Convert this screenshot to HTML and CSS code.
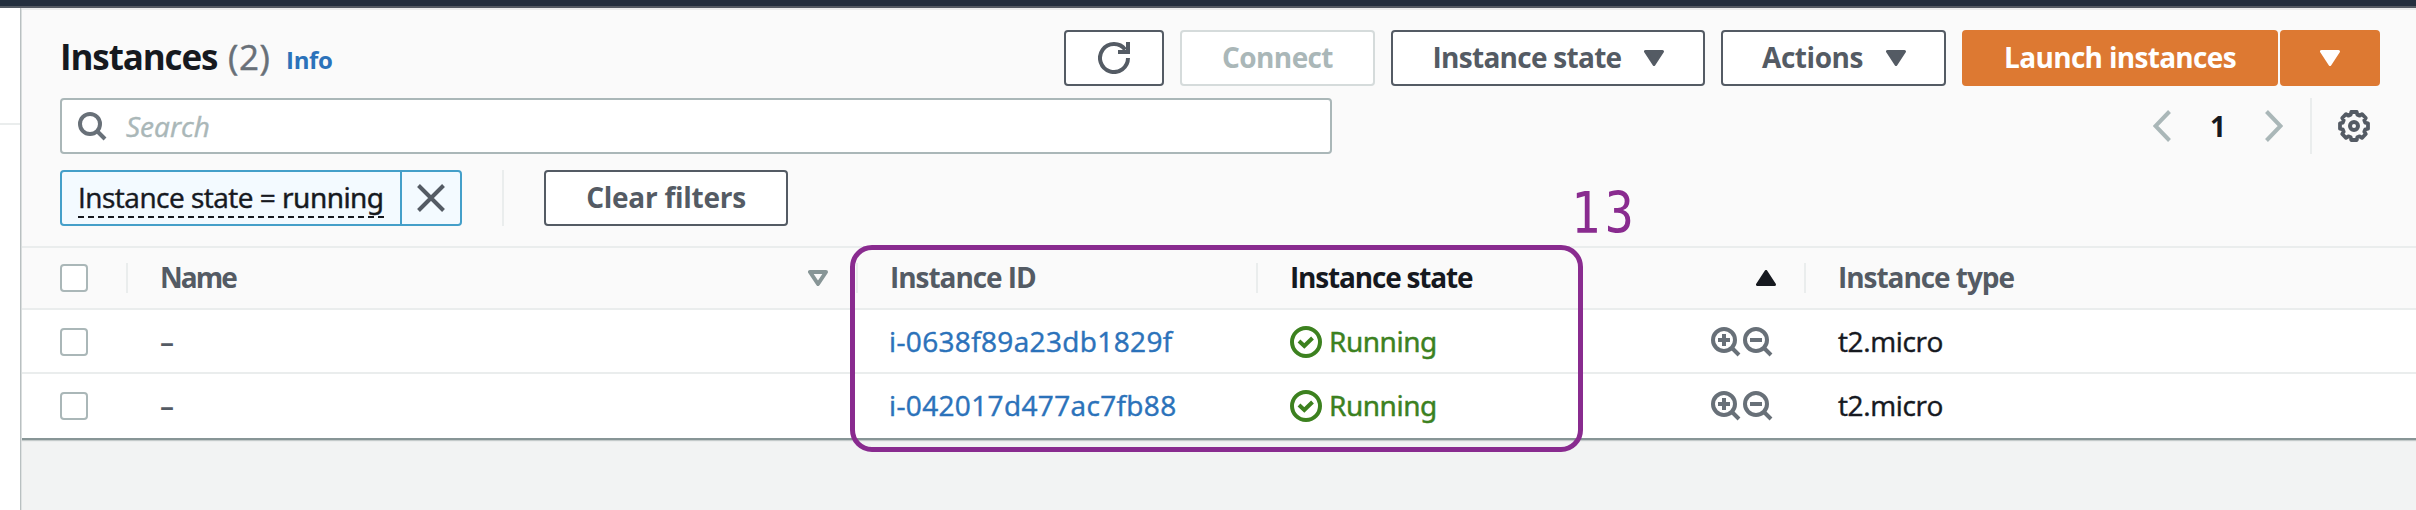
FILE: index.html
```html
<!DOCTYPE html>
<html lang="en">
<head>
<meta charset="utf-8">
<title>Instances</title>
<link rel="stylesheet" href="styles.css">
</head>
<body>
<svg class="defs" width="0" height="0" aria-hidden="true">
  <symbol id="caret" viewBox="0 0 20 16"><path d="M1.5 1.5h17L10 14.5z" fill="currentColor" stroke="currentColor" stroke-width="3" stroke-linejoin="round"/></symbol>
  <symbol id="caret-up" viewBox="0 0 20 16"><path d="M1.5 14.5h17L10 1.5z" fill="currentColor" stroke="currentColor" stroke-width="3" stroke-linejoin="round"/></symbol>
  <symbol id="caret-open" viewBox="0 0 20 16"><path d="M2 2h16L10 14z" fill="none" stroke="currentColor" stroke-width="4" stroke-linejoin="round"/></symbol>
  <symbol id="check" viewBox="0 0 32 32"><circle cx="16" cy="16" r="14" fill="none" stroke="currentColor" stroke-width="4"/><path d="M9 15l5.3 5 8.2-8" fill="none" stroke="currentColor" stroke-width="4"/></symbol>
  <symbol id="zoom-in" viewBox="0 0 32 32"><circle cx="13" cy="13" r="11" fill="none" stroke="currentColor" stroke-width="4"/><path d="M20.500 20.500l7.500 7.500M7 13h12M13 7v12" fill="none" stroke="currentColor" stroke-width="4"/></symbol>
  <symbol id="zoom-out" viewBox="0 0 32 32"><circle cx="13" cy="13" r="11" fill="none" stroke="currentColor" stroke-width="4"/><path d="M20.500 20.500l7.500 7.500M7 13h12" fill="none" stroke="currentColor" stroke-width="4"/></symbol>
</svg>
<div class="topbar"></div>
<div class="shell">
  <nav class="side"></nav>
  <main class="main">
    <section class="panel">
      <div class="titlebar">
        <h1 class="title">Instances</h1><span class="count">(2)</span><a class="info">Info</a>
        <div class="actions">
          <button class="btn refresh"><svg width="32" height="32" viewBox="0 0 32 32"><path d="M30 16A14 14 0 1 1 27.200 7.600" fill="none" stroke="currentColor" stroke-width="4"/><path d="M28 0h4v12H20V8h5.500L28 8z" fill="currentColor"/></svg></button>
          <button class="btn connect"><span>Connect</span></button>
          <button class="btn state"><span>Instance state</span><svg class="caret"><use href="#caret"/></svg></button>
          <button class="btn act"><span>Actions</span><svg class="caret"><use href="#caret"/></svg></button>
          <div class="split">
            <button class="btn launch"><span>Launch instances</span></button>
            <button class="btn launch-more"><svg class="caret"><use href="#caret"/></svg></button>
          </div>
        </div>
      </div>
      <div class="searchbar">
        <div class="search"><svg width="32" height="32" viewBox="0 0 32 32"><circle cx="14" cy="14" r="10" fill="none" stroke="currentColor" stroke-width="4"/><path d="M20.500 20.500l8.500 8.500" stroke="currentColor" stroke-width="4"/></svg><span>Search</span></div>
        <div class="pager">
          <svg width="18" height="32" viewBox="0 0 18 32"><path d="M16.500 1.500L2.500 16l14 14.500" fill="none" stroke="currentColor" stroke-width="4"/></svg>
          <b class="page">1</b>
          <svg width="18" height="32" viewBox="0 0 18 32"><path d="M1.500 1.500l14 14.500-14 14.500" fill="none" stroke="currentColor" stroke-width="4"/></svg>
          <div class="settings"><svg width="32" height="32" viewBox="0 0 32 32"><g fill="none" stroke="currentColor"><circle cx="16" cy="16" r="4" stroke-width="4"/><path stroke-width="3.800" stroke-linejoin="round" d="M12.700 4.700L13.300 2H18.700L19.300 4.700L21.700 5.700L24 4.200L27.800 8L26.300 10.300L27.300 12.700L30 13.300V18.700L27.300 19.300L26.300 21.700L27.800 24L24 27.800L21.700 26.300L19.300 27.300L18.700 30H13.300L12.700 27.300L10.300 26.300L8 27.800L4.200 24L5.700 21.700L4.700 19.300L2 18.700V13.300L4.700 12.700L5.700 10.300L4.200 8L8 4.200L10.300 5.700z"/></g></svg></div>
        </div>
      </div>
      <div class="filters">
        <div class="token"><div class="token-label"><span class="token-text">Instance state = <i>running</i></span></div><div class="token-x"><svg width="28" height="28" viewBox="0 0 28 28"><path d="M1.500 1.500l25 25M26.500 1.500l-25 25" stroke="currentColor" stroke-width="4"/></svg></div></div>
        <div class="rule"></div>
        <button class="btn clear"><span>Clear filters</span></button>
      </div>
      <div class="table">
        <div class="row head">
          <div class="cell"><span class="box"></span></div>
          <div class="cell"><span class="h-name">Name</span><svg class="caret sort"><use href="#caret-open"/></svg></div>
          <div class="cell"><span class="h-id">Instance ID</span></div>
          <div class="cell sorted"><span class="h-state">Instance state</span><svg class="caret sort"><use href="#caret-up"/></svg></div>
          <div class="cell"><span class="h-type">Instance type</span></div>
        </div>
        <div class="row item">
          <div class="cell"><span class="box"></span></div>
          <div class="cell none">–</div>
          <div class="cell id">i-0638f89a23db1829f</div>
          <div class="cell status"><svg class="ic"><use href="#check"/></svg><span>Running</span><div class="zooms"><svg class="ic"><use href="#zoom-in"/></svg><svg class="ic"><use href="#zoom-out"/></svg></div></div>
          <div class="cell type">t2.micro</div>
        </div>
        <div class="row item">
          <div class="cell"><span class="box"></span></div>
          <div class="cell none">–</div>
          <div class="cell id">i-042017d477ac7fb88</div>
          <div class="cell status"><svg class="ic"><use href="#check"/></svg><span>Running</span><div class="zooms"><svg class="ic"><use href="#zoom-in"/></svg><svg class="ic"><use href="#zoom-out"/></svg></div></div>
          <div class="cell type">t2.micro</div>
        </div>
      </div>
    </section>
  </main>
</div>
<div class="callout"></div>
<div class="callout-num">13</div>
</body>
</html>
```
FILE: styles.css
```css
* { box-sizing: border-box; }
body { margin: 0; height: 510px; overflow: hidden; background: #fff; color: #16191f; font: 400 28px/40px "Open Sans", "Noto Sans", sans-serif; white-space: nowrap; }
svg { display: block; flex: none; }
.defs { position: absolute; }
.topbar { height: 8px; background: #232f3e; border-bottom: 2px solid #545b64; }
.shell { display: flex; height: 502px; }
.side { width: 20px; background: linear-gradient(#eaeded, #eaeded) 0 115px / 20px 2px no-repeat #fff; }
.main { flex: 1; background: #f2f3f3; border-left: 1px solid #b9c0c1; box-shadow: inset 1px 0 #dfe2e2; padding-left: 1px; }
.panel { background: #fafafa; border-top: 2px solid #eaeded; border-bottom: 2px solid #879596; box-shadow: 0 1px 1px #c4caca; height: 432px; }

.titlebar { display: flex; height: 88px; padding: 20px 36px 0 38px; line-height: 56px; }
.title { margin: 0; width: 168px; font-size: 35px; line-height: 54px; font-weight: 700; letter-spacing: -1.12px; }
.count { font-size: 35px; line-height: 54px; color: #687078; width: 57px; letter-spacing: 0.6px; }
.info { font-size: 24px; line-height: 60px; font-weight: 700; color: #2b72ba; letter-spacing: -0.3px; padding-left: 1px; }
.actions { display: flex; gap: 16px; margin-left: auto; }
.btn { display: flex; align-items: center; justify-content: center; height: 56px; margin: 0; padding: 0; background: #fff; border: 2px solid #545b64; border-radius: 4px; color: #545b64; font: 700 28px/40px "Open Sans", sans-serif; letter-spacing: -0.6px; }
.btn span { position: relative; top: -1px; }
.caret { width: 20px; height: 16px; }
.refresh { width: 100px; }
.connect { width: 195px; border-color: #d5dbdb; color: #aab7b8; }
.state { width: 314px; gap: 23px; padding-left: 1px; letter-spacing: -0.72px; }
.act { width: 225px; gap: 23px; padding-left: 1px; letter-spacing: -0.44px; }
.split { display: flex; gap: 2px; }
.launch, .launch-more { background: #dd7932; border-color: #dd7932; color: #fff; }
.launch { width: 316px; letter-spacing: -0.69px; }
.launch-more { width: 100px; }

.searchbar { display: flex; justify-content: space-between; height: 72px; padding: 0 30px 16px 38px; }
.search { display: flex; align-items: center; gap: 18px; width: 1272px; height: 56px; padding-left: 14px; background: #fff; border: 2px solid #aab7b8; border-radius: 4px; color: #687078; }
.search span { color: #aab7b8; font-style: italic; }
.pager { display: flex; align-items: center; color: #aab7b8; }
.page { width: 94px; text-align: center; color: #16191f; }
.settings { display: flex; align-items: center; justify-content: flex-end; width: 76px; height: 56px; margin-left: 27px; padding-right: 16px; border-left: 2px solid #eaeded; color: #545b64; }

.filters { display: flex; height: 76px; padding-left: 38px; }
.token { display: flex; width: 402px; height: 56px; background: #f3faff; border: 2px solid #449fc9; border-radius: 4px; }
.token-label { width: 340px; border-right: 2px solid #449fc9; padding: 4px 0 0 16px; }
.token-text { display: block; width: 306px; height: 42px; letter-spacing: -0.5px; line-height: 43px; background: repeating-linear-gradient(90deg, #16191f 0 6px, transparent 6px 10px) 0 40px / 306px 2px no-repeat; }
.token-text i { font: 400 28px "Noto Sans", sans-serif; letter-spacing: -0.55px; }
.count, .search span, .token-text, .id, .type, .status span { -webkit-text-stroke: 0.45px currentColor; }
.token-x { display: flex; align-items: center; justify-content: center; flex: 1; color: #545b64; }
.rule { width: 2px; height: 56px; margin: 0 40px; background: #eaeded; }
.clear { width: 244px; letter-spacing: -0.26px; }

.table { background: #fff; }
.row { display: grid; grid-template-columns: 104px 730px 400px 548px 1fr; height: 64px; border-bottom: 2px solid #eaeded; }
.row:last-child { border-bottom: 0; padding-bottom: 2px; }
.cell { display: flex; align-items: center; padding-left: 34px; }
.cell:first-child { padding-left: 38px; }
.head { background: #fafafa; border-top: 2px solid #eaeded; color: #545b64; font-weight: 700; }
.head .cell + .cell { background: linear-gradient(#eaeded, #eaeded) 0 15px / 2px 30px no-repeat; }
.head .cell span:not(.box) { position: relative; top: -1px; }
.head .sorted { color: #16191f; }
.sort { margin: 0 28px 0 auto; color: #879596; }
.sorted .sort { color: #16191f; }
.h-name { letter-spacing: -2px; }
.h-id, .h-type { letter-spacing: -1.05px; }
.h-state { letter-spacing: -1.19px; }
.box { width: 28px; height: 28px; background: #fff; border: 2px solid #aab7b8; border-radius: 4px; }
.item .box, .status > .ic { margin-top: 2px; }
.none { color: #545b64; font-weight: 600; }
.id { padding-left: 33px; color: #2b72ba; letter-spacing: 0.35px; }
.status { color: #3c811f; }
.status span { margin-left: 7px; font-family: "Noto Sans", sans-serif; letter-spacing: -0.48px; }
.ic { width: 32px; height: 32px; }
.zooms { display: flex; margin: 4px 29px 0 auto; color: #687078; }
.type { letter-spacing: -0.38px; }

.callout { position: absolute; left: 850px; top: 245px; width: 733px; height: 207px; border: 5px solid #892b8f; border-radius: 22px; }
.callout-num { position: absolute; left: 1571px; top: 179px; color: #892b8f; font: 57px/68px "DejaVu Sans Mono", monospace; letter-spacing: 5.5px; transform: scaleX(0.85); transform-origin: left; }
```
